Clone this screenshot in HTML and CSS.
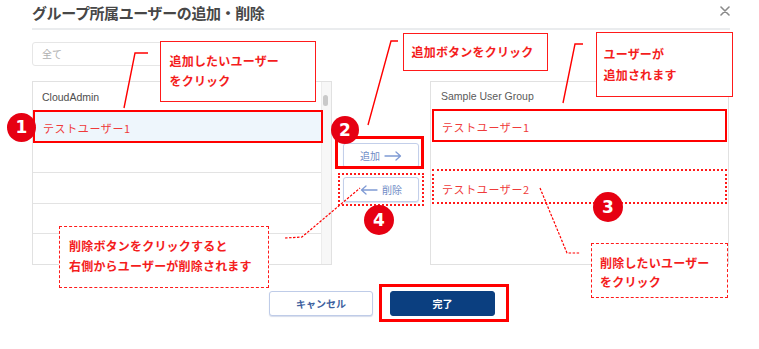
FILE: index.html
```html
<!DOCTYPE html>
<html lang="ja">
<head>
<meta charset="utf-8">
<title>グループ所属ユーザーの追加・削除</title>
<link rel="stylesheet" href="styles.css">
</head>
<body>
<div class="dialog">
  <header class="dlg-head">
    <h1 class="dlg-title">グループ所属ユーザーの追加・削除</h1>
    <span class="close" aria-label="close">
      <svg width="10" height="10" viewBox="0 0 10 10"><path d="M1 1L9 9M9 1L1 9" stroke="#8a8a8a" stroke-width="1.6" stroke-linecap="round"/></svg>
    </span>
  </header>

  <div class="filter">
    <div class="select">全て</div>
  </div>

  <div class="panes">
    <div class="list list-left">
      <div class="list-main">
        <div class="list-head">CloudAdmin</div>
        <div class="row row-selected"><span class="user">テストユーザー1</span></div>
        <div class="row"></div>
        <div class="row"></div>
        <div class="row"></div>
        <div class="row row-last"></div>
      </div>
      <div class="track"><div class="thumb"></div></div>
    </div>

    <div class="mid">
      <button class="move-btn">追加
        <svg width="18" height="10" viewBox="0 0 18 10"><path d="M1 5H16M12 1L16.5 5L12 9" fill="none" stroke="#7f9ad4" stroke-width="1.3" stroke-linecap="round" stroke-linejoin="round"/></svg>
      </button>
      <button class="move-btn">
        <svg width="18" height="10" viewBox="0 0 18 10"><path d="M17 5H2M6 1L1.5 5L6 9" fill="none" stroke="#7f9ad4" stroke-width="1.3" stroke-linecap="round" stroke-linejoin="round"/></svg>
        削除</button>
    </div>

    <div class="list list-right">
      <div class="list-main">
        <div class="list-head list-head-right">Sample User Group</div>
        <div class="rrow rrow-1"><span class="user">テストユーザー1</span></div>
        <div class="rgap"></div>
        <div class="rrow rrow-2"><span class="user">テストユーザー2</span></div>
      </div>
    </div>
  </div>

  <footer class="dlg-foot">
    <button class="btn btn-cancel">キャンセル</button>
    <button class="btn btn-done">完了</button>
  </footer>
</div>

<div class="anno">
  <svg class="leaders" width="759" height="349" viewBox="0 0 759 349">
    <polyline points="148,53 135,53 124,108" fill="none" stroke="#f00" stroke-width="1.4"/>
    <polyline points="398,41 391,41 368,125" fill="none" stroke="#f00" stroke-width="1.4"/>
    <polyline points="583,44 575,44 563,103" fill="none" stroke="#f00" stroke-width="1.4"/>
    <polyline points="285,238 302,237 360,188" fill="none" stroke="#f00" stroke-width="1.2" stroke-dasharray="2.5,1.5"/>
    <polyline points="540,188 567,253 580,253" fill="none" stroke="#f00" stroke-width="1.2" stroke-dasharray="2.5,1.5"/>
  </svg>

  <div class="frame frame-solid box-a"></div>
  <div class="frame frame-solid box-b"></div>
  <div class="frame frame-thick box-c"></div>
  <div class="frame frame-dotted box-d"></div>
  <div class="frame frame-dotted box-e"></div>
  <div class="frame frame-thick box-f"></div>

  <div class="callout callout-1">追加したいユーザー<br>をクリック</div>
  <div class="callout callout-2">追加ボタンをクリック</div>
  <div class="callout callout-3">ユーザーが<br>追加されます</div>
  <div class="callout callout-dash callout-4">削除ボタンをクリックすると<br>右側からユーザーが削除されます</div>
  <div class="callout callout-dash callout-5">削除したいユーザー<br>をクリック</div>

  <div class="badge badge-1">1</div>
  <div class="badge badge-2">2</div>
  <div class="badge badge-3">3</div>
  <div class="badge badge-4">4</div>
</div>
</body>
</html>
```

FILE: styles.css
```css
* { box-sizing: border-box; }

html, body {
  margin: 0;
  padding: 0;
  background: #ffffff;
}

body {
  width: 759px;
  height: 349px;
  overflow: hidden;
  position: relative;
  font-family: "Noto Sans CJK JP", "Liberation Sans", sans-serif;
}

.dialog {
  padding: 0 29px 0 32px;
}

/* header */
.dlg-head {
  display: flex;
  justify-content: space-between;
  align-items: flex-start;
  height: 30px;
  border-bottom: 2px solid #eaecee;
}

.dlg-title {
  margin: 4px 0 0 0;
  font-size: 15px;
  line-height: 17px;
  font-weight: 700;
  color: #474747;
  letter-spacing: -0.4px;
}

.close {
  display: block;
  width: 10px;
  height: 10px;
  margin-top: 6px;
}

.close svg { display: block; }

/* filter */
.filter {
  margin-top: 12px;
}

.select {
  width: 268px;
  height: 24px;
  border: 1px solid #e6e6e6;
  border-radius: 3px;
  padding-left: 9px;
  font-size: 10px;
  line-height: 22px;
  color: #b0b0b0;
}

/* panes */
.panes {
  display: flex;
  margin-top: 15px;
  height: 184px;
}

.list {
  display: flex;
  border: 1px solid #e1e1e1;
  height: 184px;
  overflow: hidden;
}

.list-left { width: 300px; }
.list-right { width: 299px; padding: 0 1px; }

.list-main {
  flex: 1;
  display: flex;
  flex-direction: column;
}

.list-head {
  height: 28px;
  padding-left: 9px;
  font-family: "Liberation Sans", sans-serif;
  font-size: 10.5px;
  line-height: 31px;
  color: #4e4e4e;
}

.list-head-right {
  height: 27px;
  line-height: 29px;
  color: #5a5a5a;
}

.user {
  font-size: 11px;
  color: #ef3b3b;
  letter-spacing: 0.6px;
}

.row {
  height: 31px;
  border-bottom: 1px solid #e3e3e3;
}

.row-selected {
  height: 33px;
  background: #eef6fc;
  border-bottom: none;
  padding-left: 10px;
  line-height: 33px;
}

.row-last { border-bottom: none; }

.track {
  width: 10px;
  background: #f7f7f7;
  border-left: 1px solid #ececec;
  padding-top: 13px;
}

.thumb {
  width: 5px;
  height: 11px;
  margin-left: 1px;
  border-radius: 3px;
  background: #c9c9c9;
}

.rrow {
  padding-left: 10px;
}

.rrow-1 {
  height: 33px;
  line-height: 33px;
}

.rgap { height: 27px; }

.rrow-2 {
  height: 35px;
  line-height: 36px;
}

/* middle buttons */
.mid {
  width: 98px;
  display: flex;
  flex-direction: column;
  align-items: center;
  padding-top: 62px;
  gap: 9px;
}

.move-btn {
  width: 76px;
  height: 25px;
  display: flex;
  align-items: center;
  justify-content: center;
  gap: 4px;
  border: 1px solid #c3cfea;
  border-radius: 3px;
  background: #ffffff;
  box-shadow: 0 1px 1px rgba(120, 140, 190, 0.25);
  font-family: "Noto Sans CJK JP", sans-serif;
  font-size: 10px;
  color: #6f8cc6;
  padding: 0;
}

.move-btn svg { display: block; }

/* footer */
.dlg-foot {
  display: flex;
  justify-content: center;
  gap: 17px;
  margin-top: 26px;
  padding-left: 2px;
}

.btn {
  height: 25px;
  border-radius: 3px;
  font-family: "Noto Sans CJK JP", sans-serif;
  font-size: 10px;
  font-weight: 700;
  padding: 0;
}

.btn-cancel {
  width: 104px;
  background: #ffffff;
  border: 1px solid #bfcce8;
  color: #3d5f9e;
  box-shadow: 0 1px 1px rgba(120, 140, 190, 0.3);
}

.btn-done {
  width: 105px;
  background: #0b3f80;
  border: 1px solid #0b3f80;
  color: #ffffff;
}

/* annotations overlay */
.anno {
  position: absolute;
  left: 0;
  top: 0;
  width: 759px;
  height: 349px;
  pointer-events: none;
}

.leaders {
  position: absolute;
  left: 0;
  top: 0;
}

.frame { position: absolute; }

.frame-solid { border: 2px solid #ff0000; }
.frame-thick { border: 3px solid #ff0000; }
.frame-dotted { border: 2px dotted #ff1a1a; }

.box-a { left: 33px; top: 110px; width: 290px; height: 33px; }
.box-b { left: 432px; top: 109px; width: 295px; height: 33px; }
.box-c { left: 335px; top: 136px; width: 89px; height: 33px; }
.box-d { left: 338px; top: 173px; width: 86px; height: 33px; }
.box-e { left: 432px; top: 169px; width: 295px; height: 35px; }
.box-f { left: 379px; top: 284px; width: 130px; height: 38px; }

.callout {
  position: absolute;
  background: #ffffff;
  border: 1.5px solid #ff1a1a;
  font-size: 12px;
  font-weight: 700;
  color: #f41d1d;
  letter-spacing: 0.2px;
  line-height: 20px;
  white-space: nowrap;
}

.callout-dash { border: 1px dashed #ff1a1a; }

.callout-1 { left: 160px; top: 41px; width: 156px; height: 61px; padding: 9px 0 0 8.5px; }
.callout-2 { left: 403px; top: 33px; width: 145px; height: 38px; padding: 7.5px 0 0 7.5px; }
.callout-3 { left: 596px; top: 32px; width: 137px; height: 65px; padding: 10px 0 0 6.5px; line-height: 21px; }
.callout-4 { left: 59px; top: 226px; width: 210px; height: 62px; padding: 9px 0 0 9px; }
.callout-5 { left: 591px; top: 243px; width: 137px; height: 55px; padding: 8.5px 0 0 8px; line-height: 19px; }

.badge {
  position: absolute;
  width: 29px;
  height: 29px;
  border-radius: 50%;
  background: #e60012;
  color: #ffffff;
  font-family: "DejaVu Sans", "Liberation Sans", sans-serif;
  font-weight: 700;
  font-size: 17px;
  line-height: 29px;
  text-align: center;
}

.badge-1 { left: 7px; top: 113px; }
.badge-2 { left: 331px; top: 116px; width: 28px; height: 28px; line-height: 28px; }
.badge-3 { left: 593px; top: 192px; width: 30px; height: 30px; line-height: 30px; }
.badge-4 { left: 364px; top: 205px; width: 30px; height: 30px; line-height: 30px; }
```
